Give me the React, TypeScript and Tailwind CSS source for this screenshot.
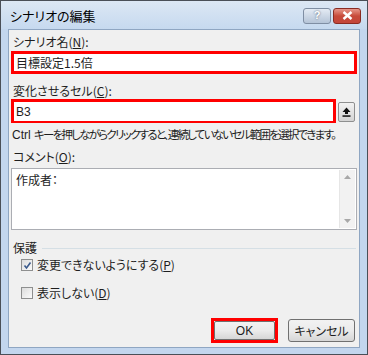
import { useState } from 'react';

const jp = "font-['Meiryo_UI','Noto_Sans_CJK_JP',sans-serif] [font-feature-settings:'palt']";

function Check({ checked, label, hot }: { checked: boolean; label: string; hot: string }) {
    return (
        <div className="flex items-center h-[16px]">
            <div className="w-[12px] h-[12px] border border-[#8e8f8f] bg-gradient-to-br from-[#dcdcdc] to-[#fbfbfb] flex items-center justify-center">
                {checked && (
                    <svg width="9" height="9" viewBox="0 0 9 9">
                        <path d="M1.5 4.5 L3.5 7 L7.5 1.5" fill="none" stroke="#3b5a8c" strokeWidth="1.6" />
                    </svg>
                )}
            </div>
            <span className="ml-[4px]">
                {label}(<span className="underline">{hot}</span>)
            </span>
        </div>
    );
}

export default function App() {
    const [name, setName] = useState('目標設定1.5倍');
    const [cell, setCell] = useState('B3');

    return (
        <div className={`w-[368px] h-[355px] bg-[#c3d6ee] border border-[#4a4f57] flex flex-col text-[12px] text-[#1e1e1e] ${jp}`}>
            {/* title bar */}
            <div className="h-[28px] flex items-center bg-gradient-to-b from-[#dce7f4] to-[#c6d9ef] pl-[9px] pr-[6px]">
                <span className="text-[13px] text-black mt-[1px]">シナリオの編集</span>
                <div className="ml-auto flex gap-[2px] mt-[1px]">
                    <div className="w-[28px] h-[16px] rounded-[3px] border border-[#7f8ea3] bg-gradient-to-b from-[#e4ebf4] to-[#b5c4d7] flex items-center justify-center text-[11px] font-bold text-white [text-shadow:0_0_2px_#44546a] font-['Liberation_Sans',sans-serif]">
                        ?
                    </div>
                    <div className="w-[28px] h-[16px] rounded-[3px] border border-[#8a2b22] bg-gradient-to-b from-[#e6968a] via-[#c74a3a] to-[#c3463a] flex items-center justify-center">
                        <svg width="11" height="9" viewBox="0 0 11 9">
                            <path d="M1.5 1 L9.5 8 M9.5 1 L1.5 8" stroke="#fff" strokeWidth="2.4" />
                        </svg>
                    </div>
                </div>
            </div>

            {/* client area */}
            <div className="flex-1 mx-[7px] mb-[6px] border border-[#8fa6c2] bg-[#f0f0f0] flex flex-col px-[2px] pt-[4px]">
                <div className="h-[16px] leading-[16px] ml-[2px]">
                    シナリオ名(<span className="underline">N</span>):
                </div>
                <div className="mt-[1px] h-[23px] w-[346px] border-[3px] border-[#ff0000] bg-white">
                    <input
                        value={name}
                        onChange={(e) => setName(e.target.value)}
                        className="w-full h-full px-[2px] outline-none bg-white text-[12px]"
                    />
                </div>

                <div className="mt-[9px] h-[16px] leading-[16px] ml-[2px]">
                    変化させるセル(<span className="underline">C</span>):
                </div>
                <div className="flex items-start">
                    <div className="h-[24px] w-[325px] border-[3px] border-[#ff0000] bg-white">
                        <input
                            value={cell}
                            onChange={(e) => setCell(e.target.value)}
                            className="w-full h-full px-[2px] outline-none bg-white text-[12px] font-['Liberation_Sans',sans-serif]"
                        />
                    </div>
                    <button className="ml-[2px] mt-[3px] w-[17px] h-[20px] rounded-[2px] border border-[#8e8f8f] bg-gradient-to-b from-[#f2f2f2] to-[#d4d4d4] flex items-center justify-center">
                        <svg width="9" height="10" viewBox="0 0 9 10">
                            <path d="M4.5 0.5 L8.5 5 L6 5 L6 7 L3 7 L3 5 L0.5 5 Z" fill="#111" />
                            <rect x="0.5" y="8.3" width="8" height="1.5" fill="#111" />
                        </svg>
                    </button>
                </div>

                <div className="mt-[3px] h-[16px] leading-[16px] ml-[1px] whitespace-nowrap text-[11.5px] tracking-[-1.75px]">
                    <span className="font-['Liberation_Sans',sans-serif] tracking-normal text-[12px]">Ctrl </span>キーを押しながらクリックすると、連続していないセル範囲を選択できます。
                </div>

                <div className="mt-[7px] h-[16px] leading-[16px] ml-[2px]">
                    コメント(<span className="underline">O</span>):
                </div>
                <div className="mt-[3px] h-[62px] w-[346px] border border-[#abadb3] bg-white flex">
                    <div className="flex-1 pl-[4px] pt-[3px] leading-[16px]">作成者：</div>
                    <div className="w-[16px] m-[1px] bg-[#f2f2f2] border-l border-[#e6e6e6] flex flex-col items-center justify-between py-[5px]">
                        <svg width="7" height="4" viewBox="0 0 7 4"><path d="M0 4 L3.5 0 L7 4 Z" fill="#a8a8a8" /></svg>
                        <svg width="7" height="4" viewBox="0 0 7 4"><path d="M0 0 L3.5 4 L7 0 Z" fill="#a8a8a8" /></svg>
                    </div>
                </div>

                <div className="mt-[10px] h-[16px] flex items-center ml-[2px]">
                    <span>保護</span>
                    <div className="ml-[5px] flex-1 mr-[1px] h-px bg-[#d5dfe5]" />
                </div>

                <div className="mt-[1px] ml-[10px] flex flex-col gap-[12px]">
                    <Check checked label="変更できないようにする" hot="P" />
                    <Check checked={false} label="表示しない" hot="D" />
                </div>

                <div className="mt-auto mb-[4px] flex justify-end items-center pr-[2px]">
                    <div className="w-[67px] h-[25px] border-[3px] border-[#ff0000]">
                        <button className="w-full h-full rounded-[2px] border border-[#707070] bg-gradient-to-b from-[#f2f2f2] via-[#ebebeb] to-[#d6d6d6] text-[12px] font-['Liberation_Sans',sans-serif]">
                            OK
                        </button>
                    </div>
                    <button className="ml-[10px] w-[67px] h-[23px] rounded-[3px] border border-[#707070] bg-gradient-to-b from-[#f2f2f2] via-[#ebebeb] to-[#d6d6d6] text-[12px]">
                        キャンセル
                    </button>
                </div>
            </div>
        </div>
    );
}
